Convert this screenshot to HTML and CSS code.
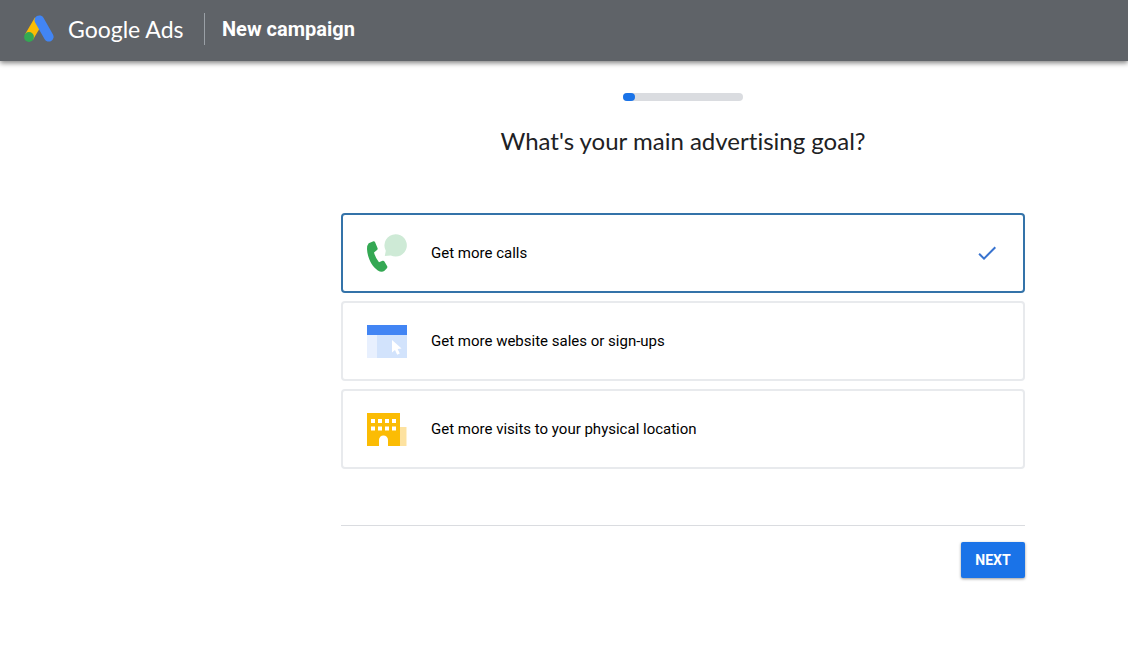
FILE: index.html
```
<!DOCTYPE html>
<html lang="en">
<head>
<meta charset="UTF-8">
<meta name="viewport" content="width=device-width, initial-scale=1">
<title>New campaign - Google Ads</title>
<link rel="stylesheet" href="styles.css">
</head>
<body>
<header class="top-bar">
    <svg class="logo" viewBox="0 0 30 28" aria-hidden="true">
        <path d="M5 22L15 5" stroke="#fbbc04" stroke-width="9.500"/>
        <path d="M15.300 5.200L24.800 21.800" stroke="#4285f4" stroke-width="9.600" stroke-linecap="round"/>
        <circle cx="5" cy="22" r="4.900" fill="#34a853"/>
    </svg>
    <span class="brand">Google Ads</span>
    <span class="page-name">New campaign</span>
</header>

<main class="content">
    <div class="progress">
        <div class="progress-fill" style="width: 10%;"></div>
    </div>
    <h1>What's your main advertising goal?</h1>

    <form>
        <div class="goals">
            <label class="goal">
                <input type="radio" name="goal" value="calls" checked>
                <svg class="goal-icon" viewBox="0 0 40 40" aria-hidden="true">
                    <path fill="#ceead6" d="M28.500 1.200a11.200 11.200 0 1 1-4.700 21.300L17.800 23l1-5.200A11.200 11.200 0 0 1 28.500 1.200z"/>
                    <path fill="#34a853" d="M1.700 10.200L6.500 8.200Q7.500 8 8 9L10.600 15.200Q10.900 16.200 10 17L7 19.500Q8.500 25.200 12 29.200L15.600 27.800Q16.800 27.500 17.400 28.500L20.200 33.300Q20.700 34.300 19.900 35.200L17.500 37.800Q14.500 39.700 10.800 37.400C5 33.500.4 25 0 16Q0 12 1.700 10.200z"/>
                </svg>
                <span class="goal-text">Get more calls</span>
                <svg class="check" viewBox="0 0 24 24" aria-hidden="true">
                    <path d="M9 16.170L4.830 12l-1.420 1.410L9 19 21 7l-1.410-1.410z"/>
                </svg>
            </label>
            <label class="goal">
                <input type="radio" name="goal" value="website">
                <svg class="goal-icon" viewBox="0 0 40 40" aria-hidden="true">
                    <path fill="#e8f0fe" d="M0 14h10v23H0z"/>
                    <path fill="#d2e3fc" d="M10 14h30v23H10z"/>
                    <path fill="#4285f4" d="M0 4h40v10H0z"/>
                    <path fill="#fff" d="M25 19v12.500l3-2.600 2.200 4.800 2.600-1.200-2.200-4.600 4-.4z"/>
                </svg>
                <span class="goal-text">Get more website sales or sign-ups</span>
                <svg class="check" viewBox="0 0 24 24" aria-hidden="true">
                    <path d="M9 16.170L4.830 12l-1.420 1.410L9 19 21 7l-1.410-1.410z"/>
                </svg>
            </label>
            <label class="goal">
                <input type="radio" name="goal" value="visits">
                <svg class="goal-icon" viewBox="0 0 40 40" aria-hidden="true">
                    <path fill="#fde2a0" d="M33 18h6.500v19H33z"/>
                    <path fill="#fbbc04" d="M0 4h33v33H0z"/>
                    <path fill="#fff" d="M4 10h4v4H4zM11 10h4v4h-4zM18 10h4v4h-4zM25 10h4v4h-4zM4 17.500h4v4H4zM11 17.500h4v4h-4zM18 17.500h4v4h-4zM25 17.500h4v4h-4z"/>
                    <path fill="#fff" d="M12 37v-6a4.500 4.500 0 0 1 9 0v6z"/>
                </svg>
                <span class="goal-text">Get more visits to your physical location</span>
                <svg class="check" viewBox="0 0 24 24" aria-hidden="true">
                    <path d="M9 16.170L4.830 12l-1.420 1.410L9 19 21 7l-1.410-1.410z"/>
                </svg>
            </label>
        </div>
        <div class="actions">
            <button type="button" class="next">NEXT</button>
        </div>
    </form>
</main>
</body>
</html>
```
FILE: styles.css
```
* {
    box-sizing: border-box;
}

body {
    margin: 0;
    font-family: Roboto, Arial, sans-serif;
    color: #202124;
    background-color: #fff;
}

.top-bar {
    display: flex;
    align-items: center;
    padding: 13px 24px 16px;
    background-color: #5f6368;
    color: #fff;
    box-shadow: 0 2px 5px rgba(0, 0, 0, 0.5);
}

.logo {
    width: 30px;
    height: 28px;
    fill: none;
}

.brand {
    margin-left: 14px;
    width: 136px;
    font-family: "Google Sans", Lato, sans-serif;
    font-size: 23px;
    line-height: 32px;
    white-space: nowrap;
}

.page-name {
    padding-left: 17px;
    border-left: 1px solid #9aa0a6;
    font-size: 20px;
    font-weight: 700;
    line-height: 32px;
}

.content {
    padding: 32px 103px 32px 341px;
}

.progress {
    width: 120px;
    height: 8px;
    margin: 0 auto;
    border-radius: 4px;
    background-color: #dadce0;
}

.progress-fill {
    height: 8px;
    border-radius: 4px;
    background-color: #1a73e8;
}

h1 {
    margin: 24px 0 56px;
    font-family: "Google Sans", Lato, sans-serif;
    font-size: 24px;
    font-weight: 400;
    font-variant-ligatures: none;
    line-height: 32px;
    text-align: center;
}

.goals {
    display: flex;
    flex-direction: column;
    gap: 8px;
    padding-bottom: 56px;
    border-bottom: 1px solid #dadce0;
}

.goal {
    position: relative;
    display: flex;
    align-items: center;
    gap: 24px;
    padding: 18px 24px;
    border: 2px solid #e8eaed;
    border-radius: 4px;
    color: #000;
    cursor: pointer;
}

.goal input {
    position: absolute;
    opacity: 0;
}

.goal:has(input:checked) {
    border-color: #3473a9;
}

.goal-icon {
    width: 40px;
    height: 40px;
}

.goal-text {
    flex: 1;
    font-size: 15px;
    line-height: 24px;
}

.check {
    width: 24px;
    height: 24px;
    fill: #3873cf;
    visibility: hidden;
}

.goal input:checked ~ .check {
    visibility: visible;
}

.actions {
    display: flex;
    justify-content: flex-end;
    padding-top: 16px;
}

.next {
    min-width: 64px;
    height: 36px;
    padding: 0 14px;
    border: none;
    border-radius: 2px;
    background-color: #1a73e8;
    color: #fff;
    font-family: inherit;
    font-size: 14px;
    font-weight: 700;
    box-shadow: 0 1px 3px rgba(0, 0, 0, 0.4);
    cursor: pointer;
}
```
